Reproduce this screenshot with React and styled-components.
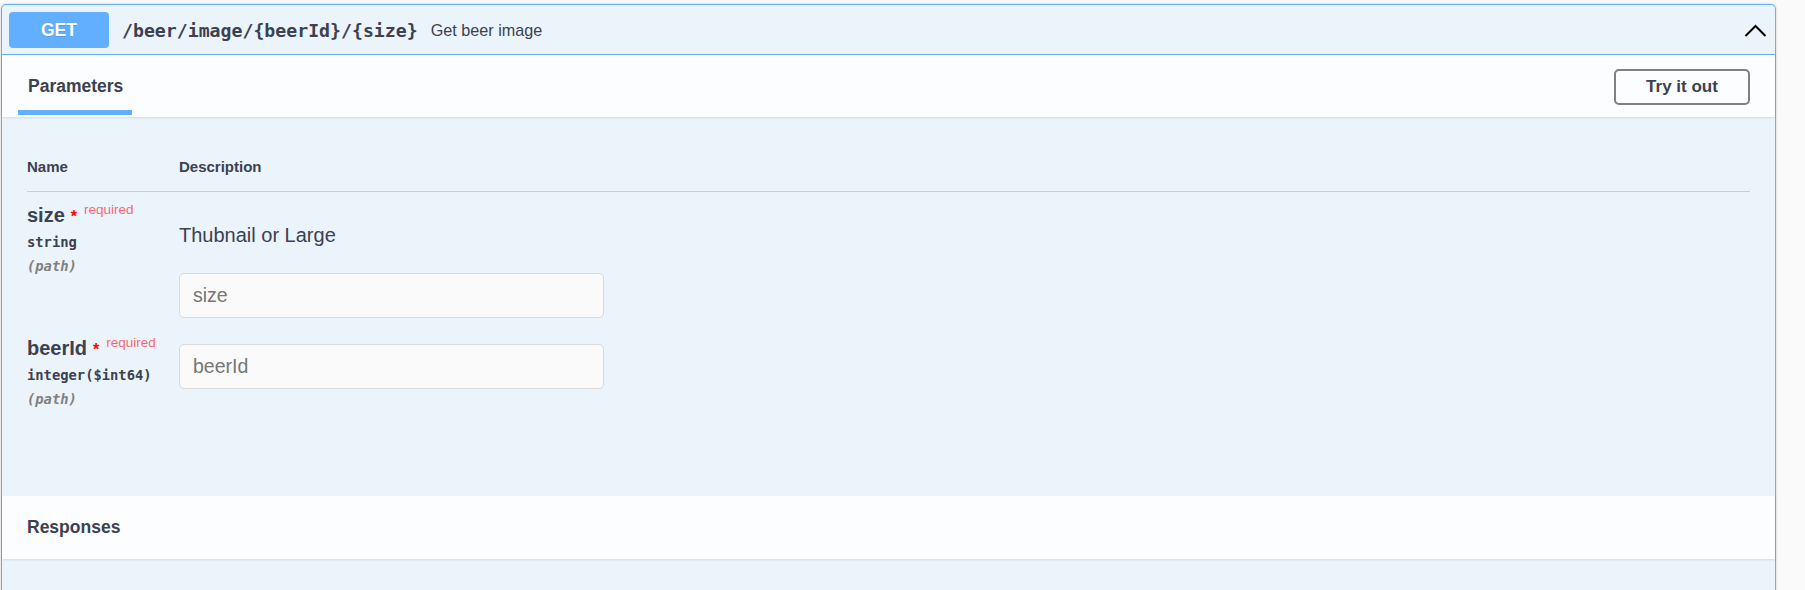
import React from 'react';
import styled, { createGlobalStyle } from 'styled-components';

const GlobalStyle = createGlobalStyle`
  body {
    margin: 0;
    background: #fafafa;
    font-family: 'Liberation Sans', Arial, sans-serif;
    color: #3b4151;
  }
`;

const Page = styled.div`
  padding: 4px 29px 0 1px;
`;

const Opblock = styled.div`
  border: 1px solid #61affe;
  border-radius: 5px;
  background: #ebf3fb;
  box-shadow: 0 0 3px rgba(0, 0, 0, 0.19);
`;

const Summary = styled.div`
  display: flex;
  align-items: center;
  padding: 7px 8px 6px 7px;
  border-bottom: 1px solid #61affe;
`;

const MethodBadge = styled.span`
  display: flex;
  align-items: center;
  justify-content: center;
  width: 100px;
  height: 36px;
  border-radius: 4px;
  background: #61affe;
  color: #fff;
  font-size: 17.5px;
  font-weight: 700;
  text-shadow: 0 1px 0 rgba(0, 0, 0, 0.1);
`;

const PathText = styled.span`
  margin-left: 13px;
  font-family: 'DejaVu Sans Mono', monospace;
  font-size: 18.2px;
  font-weight: 700;
  color: #3b4151;
`;

const SummaryDesc = styled.span`
  flex: 1;
  margin-left: 13px;
  font-size: 16.2px;
  color: #3b4151;
`;

const Chevron = styled.svg`
  display: block;
  width: 23px;
  height: 13px;
`;

const SectionHeader = styled.div`
  position: relative;
  display: flex;
  align-items: ${p => (p.$tabbed ? 'flex-end' : 'center')};
  height: ${p => (p.$tabbed ? '62px' : '63px')};
  padding: ${p => (p.$tabbed ? '0 25px 2px 16px' : '0 25px')};
  box-sizing: border-box;
  background: rgba(255, 255, 255, 0.8);
  box-shadow: 0 1px 2px rgba(0, 0, 0, 0.1);
`;

const Tab = styled.div`
  box-sizing: border-box;
  width: 114px;
  padding: 0 10px 13px;
  border-bottom: 5px solid #61affe;
  font-size: 17.5px;
  font-weight: 700;
  line-height: 21px;
`;

const SectionTitle = styled.h4`
  margin: 0;
  font-size: 17.5px;
  font-weight: 700;
  line-height: 21px;
`;

const TryButton = styled.button`
  align-self: center;
  margin: 3px 0 0 auto;
  width: 136px;
  height: 36px;
  border: 2px solid #808080;
  border-radius: 5px;
  background: transparent;
  font-family: inherit;
  font-size: 17px;
  font-weight: 700;
  color: #3b4151;
`;

const ParamsBody = styled.div`
  padding: 41px 25px 81px;
`;

const ParamRow = styled.div`
  display: grid;
  grid-template-columns: 152px 1fr;
  padding: ${p => (p.$head ? '0 0 15px' : '11px 0 7px')};
  border-bottom: ${p => (p.$head ? '1px solid rgba(59, 65, 81, 0.2)' : 'none')};
`;

const HeadCell = styled.div`
  font-size: 15px;
  font-weight: 700;
  line-height: 18px;
`;

const NameLine = styled.div`
  font-size: 20px;
  font-weight: 700;
  line-height: 24px;
  white-space: nowrap;
`;

const Star = styled.span`
  margin-left: 6px;
  font-size: 16px;
  color: red;
`;

const RequiredTag = styled.span`
  position: relative;
  top: -8px;
  margin-left: 7px;
  font-size: 13.5px;
  font-weight: 400;
  color: rgba(255, 0, 0, 0.6);
`;

const ParamMeta = styled.div`
  margin-top: ${p => (p.$muted ? '7px' : '4px')};
  font-family: 'DejaVu Sans Mono', monospace;
  font-size: 13.8px;
  font-weight: 700;
  line-height: 17px;
  font-style: ${p => (p.$muted ? 'italic' : 'normal')};
  color: ${p => (p.$muted ? '#808080' : '#3b4151')};
`;

const DescCell = styled.div`
  display: flex;
  flex-direction: column;
  align-items: flex-start;
`;

const DescText = styled.p`
  margin: 20px 0 18px;
  font-size: 20px;
  line-height: 24px;
`;

const ParamInput = styled.input`
  box-sizing: border-box;
  margin: 8px 0 0;
  width: 425px;
  height: 45px;
  padding: 0 13px;
  border: 1px solid #d9d9d9;
  border-radius: 5px;
  background: #fafafa;
  font-family: inherit;
  font-size: 19.5px;
  color: #3b4151;

  &::placeholder {
    color: #767676;
  }
`;

const ResponsesBody = styled.div`
  height: 90px;
`;

const params = [
  { name: 'size', type: 'string', desc: 'Thubnail or Large' },
  { name: 'beerId', type: 'integer($int64)' },
];

export default function App() {
  return (
    <Page>
      <GlobalStyle />
      <Opblock>
        <Summary>
          <MethodBadge>GET</MethodBadge>
          <PathText>/beer/image/&#8203;{'{beerId}'}/&#8203;{'{size}'}</PathText>
          <SummaryDesc>Get beer image</SummaryDesc>
          <Chevron viewBox="0 0 23 13">
            <polyline points="1.5,12 11.5,2 21.5,12" fill="none" stroke="#000" strokeWidth="2" />
          </Chevron>
        </Summary>

        <SectionHeader $tabbed>
          <Tab>Parameters</Tab>
          <TryButton>Try it out</TryButton>
        </SectionHeader>

        <ParamsBody>
          <ParamRow $head>
            <HeadCell>Name</HeadCell>
            <HeadCell>Description</HeadCell>
          </ParamRow>
          {params.map(p => (
            <ParamRow key={p.name}>
              <div>
                <NameLine>
                  {p.name}
                  <Star>*</Star>
                  <RequiredTag>required</RequiredTag>
                </NameLine>
                <ParamMeta>{p.type}</ParamMeta>
                <ParamMeta $muted>(path)</ParamMeta>
              </div>
              <DescCell>
                {p.desc && <DescText>{p.desc}</DescText>}
                <ParamInput placeholder={p.name} />
              </DescCell>
            </ParamRow>
          ))}
        </ParamsBody>

        <SectionHeader>
          <SectionTitle>Responses</SectionTitle>
        </SectionHeader>
        <ResponsesBody />
      </Opblock>
    </Page>
  );
}
